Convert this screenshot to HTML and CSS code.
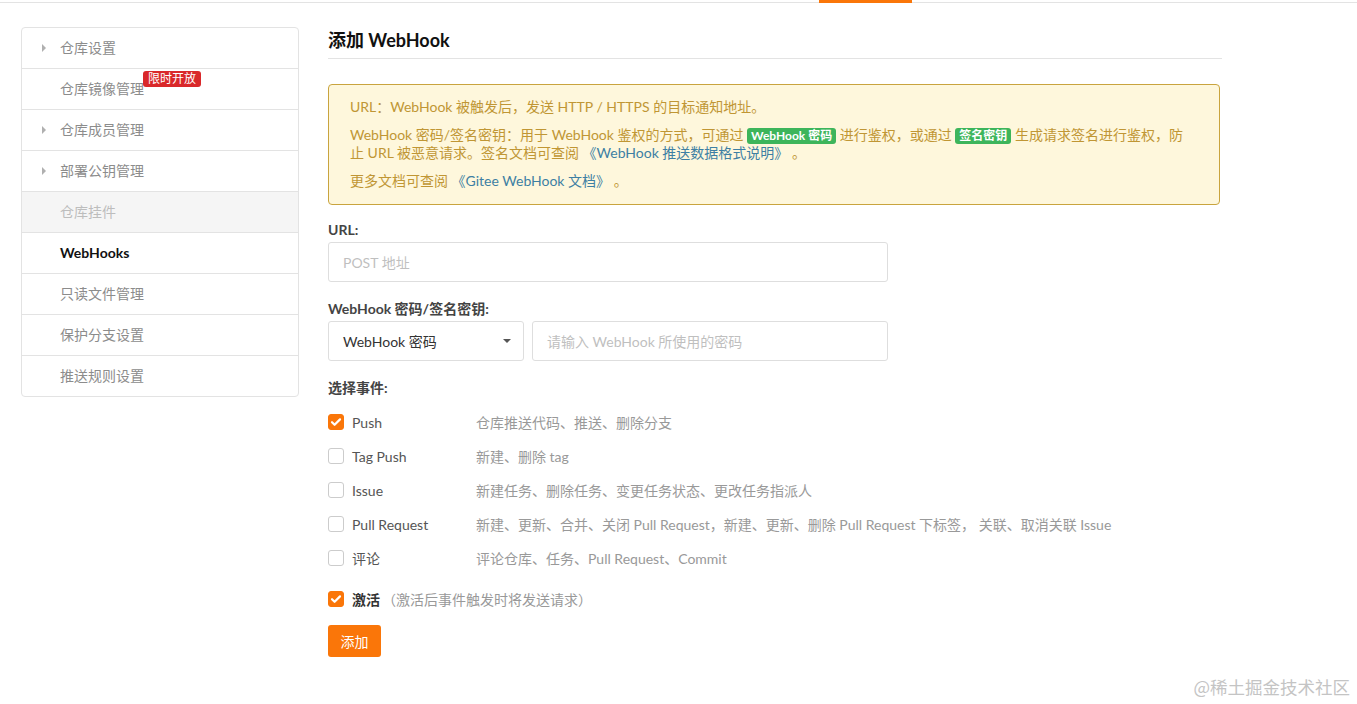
FILE: index.html
```html
<!DOCTYPE html>
<html lang="zh-CN">
<head>
<meta charset="utf-8">
<title>添加 WebHook</title>
<link rel="stylesheet" href="styles.css">
</head>
<body>
<div class="topbar"><span class="topbar-active"></span></div>
<div class="page">
  <aside class="sidebar">
    <div class="side-item"><span class="caret"></span>仓库设置</div>
    <div class="side-item">仓库镜像管理<span class="badge-red">限时开放</span></div>
    <div class="side-item"><span class="caret"></span>仓库成员管理</div>
    <div class="side-item"><span class="caret"></span>部署公钥管理</div>
    <div class="side-item disabled">仓库挂件</div>
    <div class="side-item active">WebHooks</div>
    <div class="side-item">只读文件管理</div>
    <div class="side-item">保护分支设置</div>
    <div class="side-item">推送规则设置</div>
  </aside>
  <main class="main">
    <h2 class="title">添加 WebHook</h2>
    <div class="notice">
      <p>URL：WebHook 被触发后，发送 HTTP / HTTPS 的目标通知地址。</p>
      <p>WebHook 密码/签名密钥：用于 WebHook 鉴权的方式，可通过 <span class="tag-green">WebHook 密码</span> 进行鉴权，或通过 <span class="tag-green">签名密钥</span> 生成请求签名进行鉴权，防<br>止 URL 被恶意请求。签名文档可查阅 <a class="link">《WebHook 推送数据格式说明》</a> 。</p>
      <p>更多文档可查阅 <a class="link">《Gitee WebHook 文档》</a> 。</p>
    </div>
    <div class="field">
      <div class="label">URL:</div>
      <div class="input wide"><span class="placeholder">POST 地址</span></div>
    </div>
    <div class="field">
      <div class="label">WebHook 密码/签名密钥:</div>
      <div class="row-inputs">
        <div class="input select"><span>WebHook 密码</span><span class="select-caret"></span></div>
        <div class="input grow"><span class="placeholder">请输入 WebHook 所使用的密码</span></div>
      </div>
    </div>
    <div class="label events-label">选择事件:</div>
    <div class="events">
      <div class="event"><span class="cb checked"><svg viewBox="0 0 16 16" width="16" height="16"><path d="M4 8.2l2.6 2.6L12 5.4" fill="none" stroke="#fff" stroke-width="2.2" stroke-linecap="round" stroke-linejoin="round"/></svg></span><span class="ev-name">Push</span><span class="ev-desc">仓库推送代码、推送、删除分支</span></div>
      <div class="event"><span class="cb"></span><span class="ev-name">Tag Push</span><span class="ev-desc">新建、删除 tag</span></div>
      <div class="event"><span class="cb"></span><span class="ev-name">Issue</span><span class="ev-desc">新建任务、删除任务、变更任务状态、更改任务指派人</span></div>
      <div class="event"><span class="cb"></span><span class="ev-name">Pull Request</span><span class="ev-desc">新建、更新、合并、关闭 Pull Request，新建、更新、删除 Pull Request 下标签， 关联、取消关联 Issue</span></div>
      <div class="event"><span class="cb"></span><span class="ev-name">评论</span><span class="ev-desc">评论仓库、任务、Pull Request、Commit</span></div>
    </div>
    <div class="event activate"><span class="cb checked"><svg viewBox="0 0 16 16" width="16" height="16"><path d="M4 8.2l2.6 2.6L12 5.4" fill="none" stroke="#fff" stroke-width="2.2" stroke-linecap="round" stroke-linejoin="round"/></svg></span><span class="act-name">激活</span><span class="act-desc">（激活后事件触发时将发送请求）</span></div>
    <button class="btn">添加</button>
  </main>
</div>
<div class="watermark">@稀土掘金技术社区</div>
</body>
</html>
```
FILE: styles.css
```css
* { box-sizing: border-box; }
html, body { margin: 0; padding: 0; background: #fff; }
body {
  font-family: Lato, "Noto Sans CJK SC", "Noto Sans", sans-serif;
  color: #333;
  font-size: 14px;
  width: 1357px;
  height: 704px;
  overflow: hidden;
  position: relative;
}
.topbar {
  height: 3px;
  border-bottom: 1px solid #e3e3e3;
  display: flex;
}
.topbar-active {
  display: block;
  width: 93px;
  height: 3px;
  margin-left: 819px;
  background: #fa7609;
}
.page {
  display: flex;
  align-items: flex-start;
  padding-left: 21px;
  gap: 29px;
}
.sidebar {
  width: 278px;
  margin-top: 24px;
  border: 1px solid #e3e3e3;
  border-radius: 4px;
  overflow: hidden;
}
.side-item {
  position: relative;
  height: 41px;
  line-height: 40px;
  padding-left: 38px;
  font-size: 14px;
  color: #8c8c8c;
  border-bottom: 1px solid #e3e3e3;
  display: flex;
  align-items: center;
}
.side-item:last-child { border-bottom: none; height: 40px; }
.side-item.disabled { background: #f5f5f5; color: #bdbdbd; }
.side-item.active { color: #111; font-weight: 700; }
.caret {
  position: absolute;
  left: 20px;
  top: 16px;
  width: 0; height: 0;
  border-left: 4px solid #b0b0b0;
  border-top: 4px solid transparent;
  border-bottom: 4px solid transparent;
}
.badge-red {
  position: relative;
  top: -10px;
  margin-left: -1px;
  display: inline-block;
  height: 16px;
  line-height: 16px;
  padding: 0 5px;
  background: #d9282a;
  color: #fff;
  font-size: 12px;
  border-radius: 3px;
}
.main {
  width: 894px;
  padding-top: 25px;
}
.title {
  margin: 0;
  font-size: 18px;
  line-height: 24px;
  font-weight: 700;
  color: #111;
  padding-bottom: 6px;
  border-bottom: 1px solid #e3e3e3;
}
.notice {
  margin-top: 25px;
  width: 892px;
  height: 121px;
  background: #fef7dc;
  border: 1px solid #c9a43e;
  border-radius: 4px;
  padding: 13px 21px 12px;
  color: #c09634;
  font-size: 14px;
  line-height: 18px;
}
.notice p { margin: 0 0 10px; white-space: nowrap; }
.notice p:last-child { margin: 0; }
.tag-green {
  display: inline-block;
  background: #3db55b;
  color: #fff;
  font-weight: 700;
  font-size: 12px;
  line-height: 16px;
  padding: 0 4px;
  border-radius: 3px;
}
.link { color: #3d7fa3; text-decoration: none; }
.field { margin-top: 16px; }
.field + .field { margin-top: 18px; }
.label {
  font-weight: 700;
  color: #444;
  font-size: 14px;
  line-height: 18px;
  margin-bottom: 3px;
}
.input {
  height: 40px;
  border: 1px solid #dedede;
  border-radius: 3px;
  display: flex;
  align-items: center;
  padding: 0 14px;
  font-size: 14px;
}
.input.wide { width: 560px; }
.placeholder { color: #bfbfbf; }
.row-inputs { display: flex; gap: 8px; width: 560px; }
.select { width: 196px; justify-content: space-between; color: #333; }
.grow { flex: 1; }
.select-caret {
  width: 0; height: 0;
  border-top: 4px solid #555;
  border-left: 4px solid transparent;
  border-right: 4px solid transparent;
  margin-right: -2px;
}
.events-label { margin-top: 18px; margin-bottom: 8px; }
.event {
  height: 34px;
  display: flex;
  align-items: center;
  font-size: 14px;
}
.cb {
  width: 16px; height: 16px;
  border: 1px solid #ccc;
  border-radius: 3px;
  background: #fff;
  display: flex;
  flex-shrink: 0;
}
.cb.checked { background: #fa7609; border-color: #fa7609; }
.cb.checked svg { margin: -1px; }
.ev-name { width: 132px; padding-left: 8px; color: #555; }
.ev-desc { color: #999; }
.activate { margin-top: 7px; }
.act-name { padding-left: 8px; font-weight: 700; color: #333; }
.act-desc { color: #999; padding-left: 2px; }
.btn {
  margin-top: 9px;
  height: 32px;
  width: 53px;
  border: none;
  border-radius: 3px;
  background: #fa7609;
  color: #fff;
  font-family: Lato, "Noto Sans CJK SC", sans-serif;
  font-size: 14px;
  padding: 0;
}
.watermark {
  position: absolute;
  right: 7px;
  bottom: 6px;
  font-size: 17.5px;
  color: #c4c4c4;
  font-family: "Noto Sans CJK SC", sans-serif;
  line-height: 22px;
}
```
